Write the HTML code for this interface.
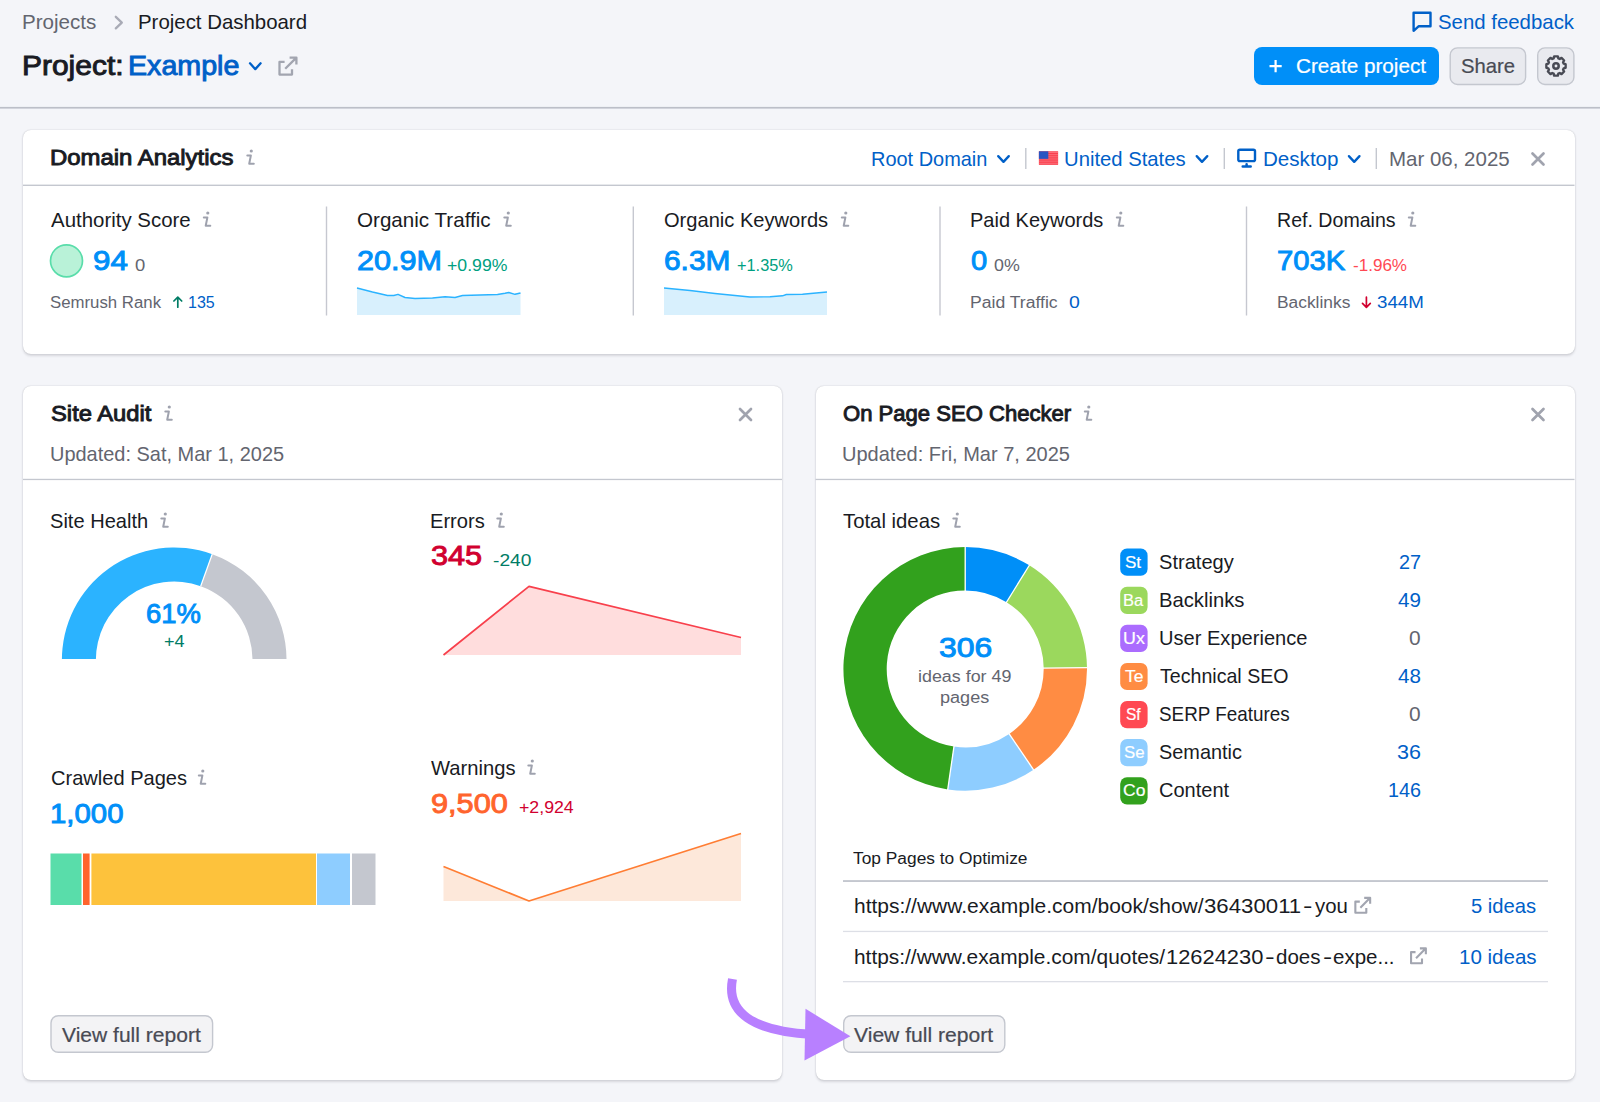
<!DOCTYPE html>
<html><head><meta charset="utf-8"><title>Project Dashboard</title><style>
html,body{margin:0;padding:0}
body{width:1600px;height:1102px;background:#f4f5f9;position:relative;overflow:hidden;font-family:"Liberation Sans",sans-serif;color:#191b23}
.t{position:absolute;white-space:pre;line-height:1;transform-origin:0 0}
.card{position:absolute;background:#fff;border-radius:8px;box-shadow:0 0 1.3px rgba(25,27,35,.22),0 1.3px 2.6px rgba(25,27,35,.13)}
.btn{position:absolute;border-radius:8px;box-sizing:border-box}
svg{position:absolute;left:0;top:0}
</style></head>
<body>
<div class="card" style="left:23px;top:130px;width:1551.5px;height:223.5px"></div>
<div class="card" style="left:23px;top:386px;width:759px;height:694px"></div>
<div class="card" style="left:815.5px;top:386px;width:759px;height:694px"></div>
<div class="btn" style="left:1254px;top:47.2px;width:184.5px;height:38px;background:#008ff8"></div>
<svg width="1600" height="1102" viewBox="0 0 1600 1102"><clipPath id="gc"><rect x="50" y="540" width="250" height="119"/></clipPath>
<g clip-path="url(#gc)"><path d="M61.92,661.76A112.3,112.3 0 0 1 212.24,554.14L200.72,586.13A78.3,78.3 0 0 0 95.91,661.17Z" fill="#2bb3ff"/>
<path d="M212.24,554.14A112.3,112.3 0 0 1 286.48,661.76L252.49,661.17A78.3,78.3 0 0 0 200.72,586.13Z" fill="#c4c7cf"/></g>
<line x1="200.72" y1="586.13" x2="212.24" y2="554.14" stroke="#fff" stroke-width="1.3"/>
<path d="M965.20,547.10A121.8,121.8 0 0 1 1029.32,565.34L1006.52,602.16A78.5,78.5 0 0 0 965.20,590.40Z" fill="#008ff8"/>
<path d="M1029.32,565.34A121.8,121.8 0 0 1 1086.99,667.65L1043.70,668.09A78.5,78.5 0 0 0 1006.52,602.16Z" fill="#9bd85d"/>
<path d="M1086.99,667.65A121.8,121.8 0 0 1 1033.52,769.74L1009.23,733.89A78.5,78.5 0 0 0 1043.70,668.09Z" fill="#ff8c43"/>
<path d="M1033.52,769.74A121.8,121.8 0 0 1 947.75,789.44L953.96,746.59A78.5,78.5 0 0 0 1009.23,733.89Z" fill="#8ecdff"/>
<path d="M947.75,789.44A121.8,121.8 0 0 1 965.20,547.10L965.20,590.40A78.5,78.5 0 0 0 953.96,746.59Z" fill="#32a11d"/>
<line x1="965.20" y1="591.40" x2="965.20" y2="546.10" stroke="#fff" stroke-width="1.3"/>
<line x1="1006.00" y1="603.01" x2="1029.85" y2="564.49" stroke="#fff" stroke-width="1.3"/>
<line x1="1042.70" y1="668.10" x2="1087.99" y2="667.64" stroke="#fff" stroke-width="1.3"/>
<line x1="1008.67" y1="733.06" x2="1034.08" y2="770.56" stroke="#fff" stroke-width="1.3"/>
<line x1="954.10" y1="745.60" x2="947.61" y2="790.43" stroke="#fff" stroke-width="1.3"/>
<path d="M357,288 L372.5,292 L387.5,295.5 L393.8,295.5 L398,294.3 L405,297.5 L415,298.5 L432.5,298 L445,296.8 L455,297.5 L462.5,295.5 L480,295 L497.5,294.5 L505,293.3 L508.8,292.5 L515,294.3 L520.5,293 L520.5,315 L357,315Z" fill="#d8f0fd"/><path d="M357,288 L372.5,292 L387.5,295.5 L393.8,295.5 L398,294.3 L405,297.5 L415,298.5 L432.5,298 L445,296.8 L455,297.5 L462.5,295.5 L480,295 L497.5,294.5 L505,293.3 L508.8,292.5 L515,294.3 L520.5,293" fill="none" stroke="#2bb3ff" stroke-width="1.4" stroke-linejoin="round"/>
<path d="M664,288 L690,290.5 L715,293.5 L750,297 L770,296.8 L782.5,295.8 L786.3,294.5 L802.5,294.3 L827,292 L827,315 L664,315Z" fill="#d8f0fd"/><path d="M664,288 L690,290.5 L715,293.5 L750,297 L770,296.8 L782.5,295.8 L786.3,294.5 L802.5,294.3 L827,292" fill="none" stroke="#2bb3ff" stroke-width="1.4" stroke-linejoin="round"/>
<path d="M443.5,655 L529,586.3 L741,637.5 L741,655Z" fill="#ffdddd"/><path d="M443.5,655 L529,586.3 L741,637.5" fill="none" stroke="#f8404c" stroke-width="1.7" stroke-linejoin="round"/>
<path d="M443.5,866.5 L529,901 L741,833.5 L741,901 L443.5,901Z" fill="#fde8da"/><path d="M443.5,866.5 L529,901 L741,833.5" fill="none" stroke="#ff7d33" stroke-width="1.7" stroke-linejoin="round"/>
<rect x="50.5" y="853.5" width="31.0" height="51.5" fill="#59ddaa"/>
<rect x="83" y="853.5" width="6.599999999999994" height="51.5" fill="#ff642d"/>
<rect x="91.4" y="853.5" width="224.6" height="51.5" fill="#fdc23c"/>
<rect x="317" y="853.5" width="33" height="51.5" fill="#8ecdff"/>
<rect x="352" y="853.5" width="23.5" height="51.5" fill="#c4c7cf"/>
<rect x="1120.2" y="548.60" width="27.4" height="27.2" rx="6.8" fill="#008ff8"/>
<rect x="1120.2" y="586.70" width="27.4" height="27.2" rx="6.8" fill="#9bd85d"/>
<rect x="1120.2" y="624.80" width="27.4" height="27.2" rx="6.8" fill="#ab6cfe"/>
<rect x="1120.2" y="662.90" width="27.4" height="27.2" rx="6.8" fill="#ff8c43"/>
<rect x="1120.2" y="701.00" width="27.4" height="27.2" rx="6.8" fill="#ff4953"/>
<rect x="1120.2" y="739.10" width="27.4" height="27.2" rx="6.8" fill="#8ecdff"/>
<rect x="1120.2" y="777.20" width="27.4" height="27.2" rx="6.8" fill="#32a11d"/>
<rect x="1450.20" y="47.90" width="75.40" height="36.60" rx="7.3" fill="rgba(138,142,155,.1)" stroke="#c4c7cf" stroke-width="1.4"/>
<rect x="1537.70" y="47.90" width="36.20" height="36.60" rx="7.3" fill="rgba(138,142,155,.1)" stroke="#c4c7cf" stroke-width="1.4"/>
<rect x="51.00" y="1015.70" width="161.60" height="36.60" rx="7.3" fill="rgba(138,142,155,.1)" stroke="#c4c7cf" stroke-width="1.4"/>
<rect x="843.70" y="1015.70" width="161.10" height="36.60" rx="7.3" fill="rgba(138,142,155,.1)" stroke="#c4c7cf" stroke-width="1.4"/>
<rect x="0" y="106.9" width="1600" height="1.7" fill="#bcbfc8"/>
<rect x="23" y="184.6" width="1551.5" height="1.4" fill="#c4c7cf"/>
<rect x="23" y="478.8" width="759" height="1.3" fill="#c4c7cf"/>
<rect x="815.5" y="478.8" width="759" height="1.3" fill="#c4c7cf"/>
<rect x="325.8" y="206.5" width="1.4" height="109" fill="#c6c8d0"/>
<rect x="632.5999999999999" y="206.5" width="1.4" height="109" fill="#c6c8d0"/>
<rect x="939.3" y="206.5" width="1.4" height="109" fill="#c6c8d0"/>
<rect x="1245.8" y="206.5" width="1.4" height="109" fill="#c6c8d0"/>
<rect x="843" y="880.1" width="705" height="1.9" fill="#c4c7cf"/>
<rect x="843" y="930.8" width="705" height="1.3" fill="#dddfe6"/>
<rect x="843" y="981" width="705" height="1.3" fill="#dddfe6"/>
<circle cx="66.5" cy="260.8" r="16" fill="#b9f2d8" stroke="#59ddaa" stroke-width="1.7"/></svg>
<div class="t" style="left:21.95px;top:13px;font-size:19.42px;color:#63656f;transform:scaleX(1.0604)">Projects</div>
<div class="t" style="left:138.37px;top:13px;font-size:19.42px;transform:scaleX(1.0515)">Project Dashboard</div>
<div class="t" style="left:21.75px;top:52px;font-size:27.47px;-webkit-text-stroke:0.93px #191b23;transform:scaleX(1.0905)">Project:</div>
<div class="t" style="left:127.93px;top:52px;font-size:27.47px;color:#0060c8;-webkit-text-stroke:0.93px #0060c8;transform:scaleX(1.0422)">Example</div>
<div class="t" style="left:1438.12px;top:13px;font-size:19.42px;color:#0060c8;transform:scaleX(1.0506)">Send feedback</div>
<div class="t" style="left:1296.43px;top:57px;font-size:19.42px;color:#ffffff;-webkit-text-stroke:0.2px #ffffff;transform:scaleX(1.0673)">Create project</div>
<div class="t" style="left:1460.79px;top:57px;font-size:19.42px;color:#484a54;-webkit-text-stroke:0.2px #484a54;transform:scaleX(1.0433)">Share</div>
<div class="t" style="left:50.28px;top:147px;font-size:21.97px;-webkit-text-stroke:0.93px #191b23;transform:scaleX(1.0885)">Domain Analytics</div>
<div class="t" style="left:871.40px;top:150px;font-size:19.42px;color:#0060c8;transform:scaleX(1.0276)">Root Domain</div>
<div class="t" style="left:1064.00px;top:150px;font-size:19.42px;color:#0060c8;transform:scaleX(1.0440)">United States</div>
<div class="t" style="left:1262.55px;top:150px;font-size:19.42px;color:#0060c8;transform:scaleX(1.0608)">Desktop</div>
<div class="t" style="left:1388.56px;top:150px;font-size:19.42px;color:#63656f;transform:scaleX(1.0554)">Mar 06, 2025</div>
<div class="t" style="left:51.01px;top:211px;font-size:19.42px;transform:scaleX(1.0530)">Authority Score</div>
<div class="t" style="left:357.24px;top:211px;font-size:19.42px;transform:scaleX(1.0621)">Organic Traffic</div>
<div class="t" style="left:664.06px;top:211px;font-size:19.42px;transform:scaleX(1.0351)">Organic Keywords</div>
<div class="t" style="left:970.20px;top:211px;font-size:19.42px;transform:scaleX(1.0303)">Paid Keywords</div>
<div class="t" style="left:1276.83px;top:211px;font-size:19.42px;transform:scaleX(1.0091)">Ref. Domains</div>
<div class="t" style="left:93.36px;top:247px;font-size:27.47px;color:#008ff8;-webkit-text-stroke:0.93px #008ff8;transform:scaleX(1.1396)">94</div>
<div class="t" style="left:134.80px;top:257px;font-size:16.24px;color:#63656f;transform:scaleX(1.1360)">0</div>
<div class="t" style="left:357.19px;top:247px;font-size:27.47px;color:#008ff8;-webkit-text-stroke:0.93px #008ff8;transform:scaleX(1.1133)">20.9M</div>
<div class="t" style="left:447.21px;top:257px;font-size:16.24px;color:#009f81;transform:scaleX(1.0885)">+0.99%</div>
<div class="t" style="left:664.01px;top:247px;font-size:27.47px;color:#008ff8;-webkit-text-stroke:0.93px #008ff8;transform:scaleX(1.0878)">6.3M</div>
<div class="t" style="left:736.77px;top:257px;font-size:16.24px;color:#009f81;transform:scaleX(1.0054)">+1.35%</div>
<div class="t" style="left:971.22px;top:247px;font-size:27.47px;color:#008ff8;-webkit-text-stroke:0.93px #008ff8;transform:scaleX(1.0602)">0</div>
<div class="t" style="left:993.82px;top:257px;font-size:16.24px;color:#63656f;transform:scaleX(1.0982)">0%</div>
<div class="t" style="left:1277.34px;top:247px;font-size:27.47px;color:#008ff8;-webkit-text-stroke:0.93px #008ff8;transform:scaleX(1.0637)">703K</div>
<div class="t" style="left:1352.51px;top:257px;font-size:16.24px;color:#ff4953;transform:scaleX(1.0504)">-1.96%</div>
<div class="t" style="left:50.17px;top:294px;font-size:16.24px;color:#63656f;transform:scaleX(1.0340)">Semrush Rank</div>
<div class="t" style="left:187.86px;top:294px;font-size:16.24px;color:#0060c8;transform:scaleX(0.9867)">135</div>
<div class="t" style="left:970.43px;top:294px;font-size:16.24px;color:#63656f;transform:scaleX(1.0832)">Paid Traffic</div>
<div class="t" style="left:1068.76px;top:294px;font-size:16.24px;color:#0060c8;transform:scaleX(1.1991)">0</div>
<div class="t" style="left:1277.05px;top:294px;font-size:16.24px;color:#63656f;transform:scaleX(1.0698)">Backlinks</div>
<div class="t" style="left:1377.25px;top:294px;font-size:16.24px;color:#0060c8;transform:scaleX(1.1541)">344M</div>
<div class="t" style="left:51.00px;top:403px;font-size:21.97px;-webkit-text-stroke:0.93px #191b23;transform:scaleX(1.0818)">Site Audit</div>
<div class="t" style="left:50.12px;top:445px;font-size:19.42px;color:#63656f;transform:scaleX(1.0285)">Updated: Sat, Mar 1, 2025</div>
<div class="t" style="left:50.34px;top:512px;font-size:19.42px;transform:scaleX(1.0340)">Site Health</div>
<div class="t" style="left:146.00px;top:600px;font-size:27.47px;color:#008ff8;-webkit-text-stroke:0.93px #008ff8;transform:scaleX(0.9980)">61%</div>
<div class="t" style="left:164.00px;top:633px;font-size:16.24px;color:#007c65;transform:scaleX(1.1113)">+4</div>
<div class="t" style="left:430.09px;top:512px;font-size:19.42px;transform:scaleX(1.0367)">Errors</div>
<div class="t" style="left:430.96px;top:542px;font-size:27.47px;color:#d1002f;-webkit-text-stroke:0.93px #d1002f;transform:scaleX(1.1161)">345</div>
<div class="t" style="left:492.72px;top:552px;font-size:16.24px;color:#007c65;transform:scaleX(1.1806)">-240</div>
<div class="t" style="left:50.57px;top:769px;font-size:19.42px;transform:scaleX(1.0338)">Crawled Pages</div>
<div class="t" style="left:49.94px;top:800px;font-size:27.47px;color:#008ff8;-webkit-text-stroke:0.93px #008ff8;transform:scaleX(1.0686)">1,000</div>
<div class="t" style="left:430.65px;top:759px;font-size:19.42px;transform:scaleX(1.0398)">Warnings</div>
<div class="t" style="left:430.58px;top:790px;font-size:27.47px;color:#ff642d;-webkit-text-stroke:0.93px #ff642d;transform:scaleX(1.1177)">9,500</div>
<div class="t" style="left:518.71px;top:799px;font-size:16.24px;color:#d1002f;transform:scaleX(1.0916)">+2,924</div>
<div class="t" style="left:62.37px;top:1026px;font-size:19.42px;color:#484a54;-webkit-text-stroke:0.2px #484a54;transform:scaleX(1.0841)">View full report</div>
<div class="t" style="left:843.09px;top:403px;font-size:21.97px;-webkit-text-stroke:0.93px #191b23;transform:scaleX(1.0045)">On Page SEO Checker</div>
<div class="t" style="left:842.12px;top:445px;font-size:19.42px;color:#63656f;transform:scaleX(1.0308)">Updated: Fri, Mar 7, 2025</div>
<div class="t" style="left:843.21px;top:512px;font-size:19.42px;transform:scaleX(1.0466)">Total ideas</div>
<div class="t" style="left:938.73px;top:634px;font-size:27.47px;color:#008ff8;-webkit-text-stroke:0.93px #008ff8;transform:scaleX(1.1615)">306</div>
<div class="t" style="left:918.44px;top:668px;font-size:16.24px;color:#63656f;transform:scaleX(1.1007)">ideas for 49</div>
<div class="t" style="left:940.36px;top:689px;font-size:16.24px;color:#63656f;transform:scaleX(1.1132)">pages</div>
<div class="t" style="left:1158.94px;top:553px;font-size:19.42px;transform:scaleX(1.0342)">Strategy</div>
<div class="t" style="left:1398.58px;top:553px;font-size:19.42px;color:#0060c8;transform:scaleX(1.0219)">27</div>
<div class="t" style="left:1125.28px;top:555px;font-size:16.65px;color:#ffffff;-webkit-text-stroke:0.2px #ffffff;transform:scaleX(1.0246)">St</div>
<div class="t" style="left:1158.58px;top:591px;font-size:19.42px;transform:scaleX(1.0422)">Backlinks</div>
<div class="t" style="left:1397.68px;top:591px;font-size:19.42px;color:#0060c8;transform:scaleX(1.0636)">49</div>
<div class="t" style="left:1123.21px;top:593px;font-size:16.65px;color:#ffffff;-webkit-text-stroke:0.2px #ffffff;transform:scaleX(0.9942)">Ba</div>
<div class="t" style="left:1158.71px;top:629px;font-size:19.42px;transform:scaleX(1.0346)">User Experience</div>
<div class="t" style="left:1409.02px;top:629px;font-size:19.42px;color:#63656f;transform:scaleX(1.0779)">0</div>
<div class="t" style="left:1122.57px;top:631px;font-size:16.65px;color:#ffffff;-webkit-text-stroke:0.2px #ffffff;transform:scaleX(1.0717)">Ux</div>
<div class="t" style="left:1159.83px;top:667px;font-size:19.42px;transform:scaleX(1.0097)">Technical SEO</div>
<div class="t" style="left:1397.68px;top:667px;font-size:19.42px;color:#0060c8;transform:scaleX(1.0604)">48</div>
<div class="t" style="left:1125.28px;top:669px;font-size:16.65px;color:#ffffff;-webkit-text-stroke:0.2px #ffffff;transform:scaleX(1.0495)">Te</div>
<div class="t" style="left:1159.02px;top:705px;font-size:19.42px;transform:scaleX(0.9715)">SERP Features</div>
<div class="t" style="left:1409.02px;top:705px;font-size:19.42px;color:#63656f;transform:scaleX(1.0779)">0</div>
<div class="t" style="left:1125.95px;top:707px;font-size:16.65px;color:#ffffff;-webkit-text-stroke:0.2px #ffffff;transform:scaleX(0.9325)">Sf</div>
<div class="t" style="left:1158.95px;top:743px;font-size:19.42px;transform:scaleX(1.0244)">Semantic</div>
<div class="t" style="left:1396.66px;top:743px;font-size:19.42px;color:#0060c8;transform:scaleX(1.1091)">36</div>
<div class="t" style="left:1123.70px;top:745px;font-size:16.65px;color:#ffffff;-webkit-text-stroke:0.2px #ffffff;transform:scaleX(1.0067)">Se</div>
<div class="t" style="left:1159.17px;top:781px;font-size:19.42px;transform:scaleX(1.0325)">Content</div>
<div class="t" style="left:1387.56px;top:781px;font-size:19.42px;color:#0060c8;transform:scaleX(1.0200)">146</div>
<div class="t" style="left:1122.67px;top:783px;font-size:16.65px;color:#ffffff;-webkit-text-stroke:0.2px #ffffff;transform:scaleX(1.0534)">Co</div>
<div class="t" style="left:853.19px;top:850px;font-size:16.24px;transform:scaleX(1.0681)">Top Pages to Optimize</div>
<div class="t" style="left:853.63px;top:897px;font-size:19.42px;transform:scaleX(1.0802)">https://www.example.com/book/show/</div>
<div class="t" style="left:1203.83px;top:897px;font-size:19.42px;transform:scaleX(1.1449)">36430011</div>
<div class="t" style="left:1303.04px;top:897px;font-size:19.42px;transform:scaleX(1.4598)">-</div>
<div class="t" style="left:1314.81px;top:897px;font-size:19.42px;transform:scaleX(1.0497)">you</div>
<div class="t" style="left:853.64px;top:948px;font-size:19.42px;transform:scaleX(1.0760)">https://www.example.com/quotes/</div>
<div class="t" style="left:1165.91px;top:948px;font-size:19.42px;transform:scaleX(1.1269)">12624230</div>
<div class="t" style="left:1264.80px;top:948px;font-size:19.42px;transform:scaleX(1.5015)">-</div>
<div class="t" style="left:1275.94px;top:948px;font-size:19.42px;transform:scaleX(1.0581)">does</div>
<div class="t" style="left:1323.28px;top:948px;font-size:19.42px;transform:scaleX(1.4181)">-</div>
<div class="t" style="left:1332.74px;top:948px;font-size:19.42px;transform:scaleX(1.0569)">expe...</div>
<div class="t" style="left:1471.16px;top:897px;font-size:19.42px;color:#0060c8;transform:scaleX(1.0411)">5 ideas</div>
<div class="t" style="left:1458.51px;top:948px;font-size:19.42px;color:#0060c8;transform:scaleX(1.0575)">10 ideas</div>
<div class="t" style="left:854.47px;top:1026px;font-size:19.42px;color:#484a54;-webkit-text-stroke:0.2px #484a54;transform:scaleX(1.0873)">View full report</div>
<svg width="1600" height="1102" viewBox="0 0 1600 1102"><g transform="translate(250.5,158)" fill="none" stroke="#9fa2ae" stroke-width="2.0" stroke-linecap="round" stroke-linejoin="round"><path d="M-3.2,-2.6 H0.4 L-1.3,5.7 H3.3"/><circle cx="0.8" cy="-7" r="1.6" fill="#9fa2ae" stroke="none"/></g>
<g transform="translate(207,220)" fill="none" stroke="#9fa2ae" stroke-width="2.0" stroke-linecap="round" stroke-linejoin="round"><path d="M-3.2,-2.6 H0.4 L-1.3,5.7 H3.3"/><circle cx="0.8" cy="-7" r="1.6" fill="#9fa2ae" stroke="none"/></g>
<g transform="translate(507.5,220)" fill="none" stroke="#9fa2ae" stroke-width="2.0" stroke-linecap="round" stroke-linejoin="round"><path d="M-3.2,-2.6 H0.4 L-1.3,5.7 H3.3"/><circle cx="0.8" cy="-7" r="1.6" fill="#9fa2ae" stroke="none"/></g>
<g transform="translate(845,220)" fill="none" stroke="#9fa2ae" stroke-width="2.0" stroke-linecap="round" stroke-linejoin="round"><path d="M-3.2,-2.6 H0.4 L-1.3,5.7 H3.3"/><circle cx="0.8" cy="-7" r="1.6" fill="#9fa2ae" stroke="none"/></g>
<g transform="translate(1120,220)" fill="none" stroke="#9fa2ae" stroke-width="2.0" stroke-linecap="round" stroke-linejoin="round"><path d="M-3.2,-2.6 H0.4 L-1.3,5.7 H3.3"/><circle cx="0.8" cy="-7" r="1.6" fill="#9fa2ae" stroke="none"/></g>
<g transform="translate(1412,220)" fill="none" stroke="#9fa2ae" stroke-width="2.0" stroke-linecap="round" stroke-linejoin="round"><path d="M-3.2,-2.6 H0.4 L-1.3,5.7 H3.3"/><circle cx="0.8" cy="-7" r="1.6" fill="#9fa2ae" stroke="none"/></g>
<g transform="translate(168.5,414)" fill="none" stroke="#9fa2ae" stroke-width="2.0" stroke-linecap="round" stroke-linejoin="round"><path d="M-3.2,-2.6 H0.4 L-1.3,5.7 H3.3"/><circle cx="0.8" cy="-7" r="1.6" fill="#9fa2ae" stroke="none"/></g>
<g transform="translate(1088,414)" fill="none" stroke="#9fa2ae" stroke-width="2.0" stroke-linecap="round" stroke-linejoin="round"><path d="M-3.2,-2.6 H0.4 L-1.3,5.7 H3.3"/><circle cx="0.8" cy="-7" r="1.6" fill="#9fa2ae" stroke="none"/></g>
<g transform="translate(164.5,521)" fill="none" stroke="#9fa2ae" stroke-width="2.0" stroke-linecap="round" stroke-linejoin="round"><path d="M-3.2,-2.6 H0.4 L-1.3,5.7 H3.3"/><circle cx="0.8" cy="-7" r="1.6" fill="#9fa2ae" stroke="none"/></g>
<g transform="translate(500.5,521)" fill="none" stroke="#9fa2ae" stroke-width="2.0" stroke-linecap="round" stroke-linejoin="round"><path d="M-3.2,-2.6 H0.4 L-1.3,5.7 H3.3"/><circle cx="0.8" cy="-7" r="1.6" fill="#9fa2ae" stroke="none"/></g>
<g transform="translate(202,778)" fill="none" stroke="#9fa2ae" stroke-width="2.0" stroke-linecap="round" stroke-linejoin="round"><path d="M-3.2,-2.6 H0.4 L-1.3,5.7 H3.3"/><circle cx="0.8" cy="-7" r="1.6" fill="#9fa2ae" stroke="none"/></g>
<g transform="translate(531.5,768)" fill="none" stroke="#9fa2ae" stroke-width="2.0" stroke-linecap="round" stroke-linejoin="round"><path d="M-3.2,-2.6 H0.4 L-1.3,5.7 H3.3"/><circle cx="0.8" cy="-7" r="1.6" fill="#9fa2ae" stroke="none"/></g>
<g transform="translate(956.5,521)" fill="none" stroke="#9fa2ae" stroke-width="2.0" stroke-linecap="round" stroke-linejoin="round"><path d="M-3.2,-2.6 H0.4 L-1.3,5.7 H3.3"/><circle cx="0.8" cy="-7" r="1.6" fill="#9fa2ae" stroke="none"/></g>
<path d="M115.8,16.8 L121.8,22.6 L115.8,28.4" fill="none" stroke="#a9abb6" stroke-width="2.3" stroke-linecap="round" stroke-linejoin="round"/>
<path d="M250.0,63.300000000000004 L255.3,69.10000000000001 L260.6,63.300000000000004" fill="none" stroke="#0060c8" stroke-width="2.3" stroke-linecap="round" stroke-linejoin="round"/>
<path d="M998.2,156.1 L1003.5,161.9 L1008.8,156.1" fill="none" stroke="#0060c8" stroke-width="2.3" stroke-linecap="round" stroke-linejoin="round"/>
<path d="M1196.7,156.1 L1202,161.9 L1207.3,156.1" fill="none" stroke="#0060c8" stroke-width="2.3" stroke-linecap="round" stroke-linejoin="round"/>
<path d="M1348.9,156.1 L1354.2,161.9 L1359.5,156.1" fill="none" stroke="#0060c8" stroke-width="2.3" stroke-linecap="round" stroke-linejoin="round"/>
<g transform="translate(278.3,56.4) scale(1.0)" fill="none" stroke="#a2a5b0" stroke-width="2.30" stroke-linejoin="round" stroke-linecap="butt"><path d="M6.3,5.5 H1.2 V18.2 H13.7 V12.8"/><path d="M11.3,1.2 H18.1 V8 M18.1,1.2 L6.9,12.4"/></g>
<g transform="translate(1354.3,896.8) scale(0.876)" fill="none" stroke="#a2a5b0" stroke-width="2.40" stroke-linejoin="round" stroke-linecap="butt"><path d="M6.3,5.5 H1.2 V18.2 H13.7 V12.8"/><path d="M11.3,1.2 H18.1 V8 M18.1,1.2 L6.9,12.4"/></g>
<g transform="translate(1410,947.3) scale(0.876)" fill="none" stroke="#a2a5b0" stroke-width="2.40" stroke-linejoin="round" stroke-linecap="butt"><path d="M6.3,5.5 H1.2 V18.2 H13.7 V12.8"/><path d="M11.3,1.2 H18.1 V8 M18.1,1.2 L6.9,12.4"/></g>
<rect x="1025.1" y="148" width="1.4" height="21" fill="#c4c7cf"/>
<rect x="1223.6" y="148" width="1.4" height="21" fill="#c4c7cf"/>
<rect x="1375.6" y="148" width="1.4" height="21" fill="#c4c7cf"/>
<path d="M1532.5,153.5 L1543.5,164.5 M1543.5,153.5 L1532.5,164.5" stroke="#a0a3ae" stroke-width="2.7" stroke-linecap="round"/>
<path d="M740.0,409.0 L751.0,420.0 M751.0,409.0 L740.0,420.0" stroke="#a0a3ae" stroke-width="2.7" stroke-linecap="round"/>
<path d="M1532.5,409.0 L1543.5,420.0 M1543.5,409.0 L1532.5,420.0" stroke="#a0a3ae" stroke-width="2.7" stroke-linecap="round"/>
<path d="M1413.6,12.8 H1430.5 V26.2 H1418.8 L1413.6,30.8 Z" fill="none" stroke="#0060c8" stroke-width="2.4" stroke-linejoin="round"/>
<path d="M1275.6,60 V72.2 M1269.5,66.1 H1281.7" stroke="#fff" stroke-width="2.2" stroke-linecap="butt"/>
<path d="M1554.15,56.38 L1557.85,56.38 L1558.36,58.36 L1559.73,58.92 L1561.50,57.89 L1564.11,60.50 L1563.08,62.27 L1563.64,63.64 L1565.62,64.15 L1565.62,67.85 L1563.64,68.36 L1563.08,69.73 L1564.11,71.50 L1561.50,74.11 L1559.73,73.08 L1558.36,73.64 L1557.85,75.62 L1554.15,75.62 L1553.64,73.64 L1552.27,73.08 L1550.50,74.11 L1547.89,71.50 L1548.92,69.73 L1548.36,68.36 L1546.38,67.85 L1546.38,64.15 L1548.36,63.64 L1548.92,62.27 L1547.89,60.50 L1550.50,57.89 L1552.27,58.92 L1553.64,58.36Z" fill="none" stroke="#484a54" stroke-width="2.4" stroke-linejoin="round"/><circle cx="1556" cy="66" r="2.7" fill="none" stroke="#484a54" stroke-width="2.5"/>
<rect x="1038.9" y="151.3" width="19.2" height="13.5" fill="#f8313f"/>
<rect x="1038.9" y="152.34" width="19.2" height="0.83" fill="#ff8e98"/>
<rect x="1038.9" y="154.42" width="19.2" height="0.83" fill="#ff8e98"/>
<rect x="1038.9" y="156.49" width="19.2" height="0.83" fill="#ff8e98"/>
<rect x="1038.9" y="158.57" width="19.2" height="0.83" fill="#ff8e98"/>
<rect x="1038.9" y="160.65" width="19.2" height="0.83" fill="#ff8e98"/>
<rect x="1038.9" y="162.72" width="19.2" height="0.83" fill="#ff8e98"/>
<rect x="1038.9" y="151.3" width="9.41" height="7.56" fill="#2a55c2"/>
<rect x="1238.3" y="149.7" width="16.7" height="11.4" rx="1.6" fill="none" stroke="#0060c8" stroke-width="2.4"/><path d="M1246.6,164.3 V166.4 M1242.7,166.4 H1250.7" stroke="#0060c8" stroke-width="2.5" stroke-linecap="round"/>
<path d="M177.8,307.2 V297.4 M173.9,301 L177.8,297.1 L181.7,301" fill="none" stroke="#007c65" stroke-width="1.7" stroke-linecap="round" stroke-linejoin="round"/>
<path d="M1366.4,297.2 V307 M1362.5,303.4 L1366.4,307.3 L1370.3,303.4" fill="none" stroke="#d1002f" stroke-width="1.7" stroke-linecap="round" stroke-linejoin="round"/>
<path d="M732.5,979 C 726,1012 752,1031 812,1034.5" fill="none" stroke="#b880ff" stroke-width="9" stroke-linecap="butt"/>
<path d="M805.5,1008.8 L850.4,1036.2 L804.5,1060.5 Z" fill="#b880ff"/></svg>
</body></html>
